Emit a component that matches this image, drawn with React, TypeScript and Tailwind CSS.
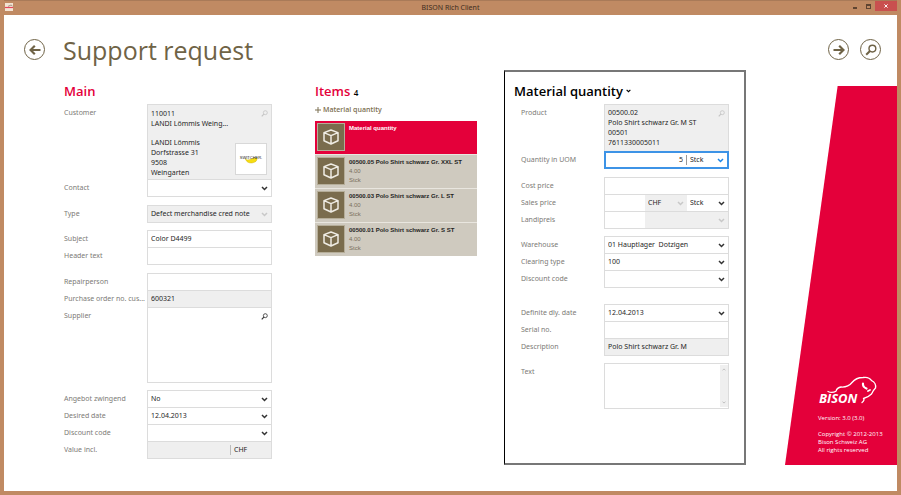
import { useId, type ReactNode } from 'react';

const box = 'relative -mt-px flex min-w-0 flex-1 border border-[#dcdcdc]';

function SearchGlyph({ className }: { className: string }) {
  return (
    <svg viewBox="0 0 12 12" className={className} fill="none" stroke="currentColor" aria-hidden="true">
      <circle cx="7.4" cy="4.6" r="3.4" strokeWidth="1.4" />
      <path d="M5 7L1.2 10.8" strokeWidth="2" />
    </svg>
  );
}

function Chevron({ className }: { className: string }) {
  return (
    <svg viewBox="0 0 8 6" className={`pointer-events-none ${className}`} fill="none" stroke="currentColor" strokeWidth="1.8" aria-hidden="true">
      <path d="M1 1.2L4 4.2L7 1.2" />
    </svg>
  );
}

function Row({ label, id, children }: { label: string; id?: string; children: ReactNode }) {
  return (
    <div className="flex">
      <label htmlFor={id} className="w-[83px] shrink-0 leading-4 whitespace-nowrap text-[#7c7a76]">
        {label}
      </label>
      {children}
    </div>
  );
}

function Group({ children, className = 'mt-[9px]' }: { children: ReactNode; className?: string }) {
  return <div className={className}>{children}</div>;
}

function TextRow({ label, value = '', readOnly = false }: { label: string; value?: string; readOnly?: boolean }) {
  const id = useId();
  return (
    <Row label={label} id={id}>
      <div className={`${box} h-[18px] ${readOnly ? 'bg-[#efefef]' : 'bg-white'}`}>
        <input id={id} defaultValue={value} readOnly={readOnly} className="w-full bg-transparent px-[3px] outline-none" />
      </div>
    </Row>
  );
}

function Drop({ id, name, value, disabled = false, tone = 'text-[#333]', className = 'flex-1' }: {
  id?: string; name?: string; value: string; disabled?: boolean; tone?: string; className?: string;
}) {
  return (
    <div className={`relative flex min-w-0 items-center ${disabled ? 'bg-[#efefef]' : 'bg-white'} ${className}`}>
      <select id={id} aria-label={name} disabled={disabled} defaultValue={value} className="h-full w-full appearance-none bg-transparent px-[3px] whitespace-pre text-[#262626] opacity-100 outline-none">
        <option>{value}</option>
      </select>
      <Chevron className={`absolute right-[3px] h-[5px] w-[7px] ${disabled ? 'text-[#c8c8c8]' : tone}`} />
    </div>
  );
}

function SelectRow({ label, value = '', disabled }: { label: string; value?: string; disabled?: boolean }) {
  const id = useId();
  return (
    <Row label={label} id={id}>
      <div className={`${box} h-[18px]`}>
        <Drop id={id} value={value} disabled={disabled} />
      </div>
    </Row>
  );
}

function RoundButton({ label, children }: { label: string; children: ReactNode }) {
  return (
    <button aria-label={label} className="grid size-[21px] shrink-0 place-items-center rounded-full border border-[#6f6346] text-[#6f6346]">
      {children}
    </button>
  );
}

function Arrow({ className = '' }: { className?: string }) {
  return (
    <svg viewBox="0 0 12 10" className={`h-[10px] w-3 ${className}`} fill="none" stroke="currentColor" strokeWidth="2.2" aria-hidden="true">
      <path d="M0.5 5H10.5M6.2 0.8L10.5 5L6.2 9.2" />
    </svg>
  );
}

function TitleBar() {
  return (
    <header className="relative flex h-[15px] items-center justify-center border-t border-[#a97a58] text-[7px] text-[#3d2c20]">
      <svg viewBox="0 0 8 8" className="absolute top-[2px] left-[1px] size-2" aria-hidden="true">
        <rect width="8" height="8" fill="#f3e3d3" />
        <path d="M0 4.5H8" stroke="#e4465c" strokeWidth="1.2" />
        <path d="M3 3.4L6 2L7.5 3" stroke="#8c7d6c" strokeWidth="0.8" fill="none" />
      </svg>
      <h1>BISON Rich Client</h1>
      <div className="absolute top-0 right-0 flex h-[10px]">
        <button aria-label="Minimize" className="grid w-[13px] place-items-center">
          <span className="mt-[3px] h-[2px] w-1 bg-[#5f4431]" />
        </button>
        <button aria-label="Maximize" className="grid w-[14px] place-items-center">
          <span className="h-[5px] w-[5px] border border-t-2 border-[#5f4431]" />
        </button>
        <button aria-label="Close" className="grid w-[22px] place-items-center bg-[#c9504f] text-white">
          <svg viewBox="0 0 5 5" className="size-1" stroke="currentColor" strokeWidth="1.2" aria-hidden="true">
            <path d="M0.5 0.5L4.5 4.5M4.5 0.5L0.5 4.5" />
          </svg>
        </button>
      </div>
    </header>
  );
}

function MainColumn() {
  return (
    <section className="min-w-0 pt-[13px]">
      <h3 className="font-['Open_Sans',sans-serif] text-[13px] leading-4 font-semibold text-[#e4003a]">Main</h3>
      <Group className="mt-[6px]">
        <Row label="Customer">
          <div className={`${box} h-[76px] bg-[#efefef] px-[3px] pt-1 leading-[10px]`}>
            <div className="min-w-0">
              <p>110011</p>
              <p>LANDI Lömmis Weing...</p>
              <p className="mt-[9px]">LANDI Lömmis</p>
              <p>Dorfstrasse 31</p>
              <p>9508</p>
              <p>Weingarten</p>
            </div>
            <button aria-label="Search customer" className="absolute top-[5px] right-[3px] text-[#c4c4c4]">
              <SearchGlyph className="size-[7px]" />
            </button>
            <svg viewBox="0 0 32 32" className="absolute right-1 bottom-1 size-8" role="img" aria-label="Switcher">
              <rect x="0.5" y="0.5" width="31" height="31" fill="#fff" stroke="#d8d8d8" />
              <path d="M10 15.500Q12 18 16 16Q19 14.500 22 15Q22.500 19 17 20Q12 20.500 10 15.500Z" fill="#f6dd12" stroke="#c9ab10" strokeWidth="0.4" />
              <text x="16" y="16" textAnchor="middle" fontSize="4" fontFamily="Liberation Sans, sans-serif" fill="#222">SWITCHER.</text>
            </svg>
          </div>
        </Row>
        <SelectRow label="Contact" />
      </Group>
      <Group>
        <SelectRow label="Type" value="Defect merchandise cred note" disabled />
      </Group>
      <Group className="mt-2">
        <TextRow label="Subject" value="Color D4499" />
        <TextRow label="Header text" />
      </Group>
      <Group>
        <TextRow label="Repairperson" />
        <TextRow label="Purchase order no. cus..." value="600321" readOnly />
        <Row label="Supplier" id="supplier">
          <div className={`${box} h-[76px]`}>
            <textarea id="supplier" className="w-full resize-none px-[3px] outline-none" />
            <button aria-label="Search supplier" className="absolute top-[5px] right-[3px] text-[#333]">
              <SearchGlyph className="size-[7px]" />
            </button>
          </div>
        </Row>
      </Group>
      <Group className="mt-2">
        <SelectRow label="Angebot zwingend" value="No" />
        <SelectRow label="Desired date" value="12.04.2013" />
        <SelectRow label="Discount code" />
        <Row label="Value incl." id="value">
          <div className={`${box} h-[18px] items-center bg-[#efefef]`}>
            <input id="value" readOnly className="min-w-0 flex-1 bg-transparent px-[3px] text-right outline-none" />
            <span className="h-[10px] w-[41px] border-l border-[#bbb] pl-[3px] leading-[10px]">CHF</span>
          </div>
        </Row>
      </Group>
    </section>
  );
}

const items = [
  '00500.05 Polo Shirt schwarz Gr. XXL ST',
  '00500.03 Polo Shirt schwarz Gr. L ST',
  '00500.01 Polo Shirt schwarz Gr. S ST',
];

function Tile() {
  return (
    <span className="grid size-7 shrink-0 place-items-center border border-[#b5ad98] bg-[#7a6c4d]">
      <svg viewBox="0 0 16 16" className="size-4" fill="none" stroke="#efece4" strokeWidth="1.5" strokeLinejoin="round" aria-hidden="true">
        <path d="M8 1L15 3.6V11.8L8 15L1 11.8V3.6ZM1 3.6L8 6.6L15 3.6M8 6.6V15" />
      </svg>
    </span>
  );
}

function ItemsColumn() {
  return (
    <section className="ml-[43px] min-w-0 pt-[13px]">
      <h3 className="font-['Open_Sans',sans-serif] text-[13px] leading-4 font-semibold text-[#e4003a]">
        Items <span className="text-[8px] text-black">4</span>
      </h3>
      <button className="mt-1 flex items-center gap-[2px] font-['Open_Sans',sans-serif] text-[7px] leading-[10px] font-semibold text-[#7d7052]">
        <svg viewBox="0 0 6 6" className="size-[6px]" stroke="currentColor" aria-hidden="true">
          <path d="M3 0V6M0 3H6" />
        </svg>
        Material quantity
      </button>
      <ul className="mt-[6px] flex flex-col gap-px bg-[#e9e6df] font-['Liberation_Sans',Arial,sans-serif] text-[6px] leading-[9px]">
        <li className="flex h-[33px] gap-1 bg-[#e4003a] px-[2px] pt-[2px] font-bold text-white">
          <Tile />
          <span className="pt-px">Material quantity</span>
        </li>
        {items.map((name) => (
          <li key={name} className="flex h-[33px] gap-1 bg-[#cfcabf] px-[2px] pt-[2px] text-[#7b705c]">
            <Tile />
            <div className="min-w-0 pt-px whitespace-nowrap">
              <p className="font-bold text-[#1e1e1e]">{name}</p>
              <p>4.00</p>
              <p>Stck</p>
            </div>
          </li>
        ))}
      </ul>
    </section>
  );
}

function DetailPanel() {
  return (
    <section className="ml-[27px] min-w-0 border-2 border-l border-[#777] border-l-black pt-[11px] pr-[15px] pl-4">
      <h3 className="-ml-[7px] flex items-center gap-[3px] font-['Open_Sans',sans-serif] text-[13px] leading-4 font-semibold text-black">
        Material quantity
        <Chevron className="h-1 w-[5px]" />
      </h3>
      <Group className="mt-[6px]">
        <Row label="Product">
          <div className={`${box} h-[48px] bg-[#efefef] px-[3px] pt-[3px] leading-[10px]`}>
            <div className="min-w-0">
              <p>00500.02</p>
              <p>Polo Shirt schwarz Gr. M ST</p>
              <p>00501</p>
              <p>7611330005011</p>
            </div>
            <button aria-label="Search product" className="absolute top-[5px] right-[3px] text-[#c4c4c4]">
              <SearchGlyph className="size-[7px]" />
            </button>
          </div>
        </Row>
        <Row label="Quantity in UOM" id="qty">
          <div className="relative -mt-px flex h-[18px] min-w-0 flex-1 items-center border-2 border-[#3d93e6] bg-white">
            <input id="qty" defaultValue="5" className="min-w-0 flex-1 px-[3px] text-right outline-none" />
            <span className="h-[10px] w-px bg-[#999]" />
            <Drop name="Unit of quantity" value="Stck" tone="text-[#1c86e8]" className="w-[40px]" />
          </div>
        </Row>
      </Group>
      <Group>
        <TextRow label="Cost price" />
        <Row label="Sales price" id="sales">
          <div className={`${box} h-[18px]`}>
            <input id="sales" className="min-w-0 flex-1 px-[3px] outline-none" />
            <Drop name="Currency" value="CHF" disabled className="w-[42px]" />
            <Drop name="Sales unit" value="Stck" className="w-[41px]" />
          </div>
        </Row>
        <Row label="Landipreis" id="landi">
          <div className={`${box} h-[18px]`}>
            <input id="landi" className="min-w-0 flex-1 px-[3px] outline-none" />
            <Drop name="Landipreis currency" value="" disabled className="w-[83px]" />
          </div>
        </Row>
      </Group>
      <Group className="mt-2">
        <SelectRow label="Warehouse" value={'01 Hauptlager\u00a0 Dotzigen'} />
        <SelectRow label="Clearing type" value="100" />
        <SelectRow label="Discount code" />
      </Group>
      <Group className="mt-[17px]">
        <SelectRow label="Definite dly. date" value="12.04.2013" />
        <TextRow label="Serial no." />
        <TextRow label="Description" value="Polo Shirt schwarz Gr. M" readOnly />
      </Group>
      <Group className="mt-2">
        <Row label="Text" id="text">
          <div className={`${box} h-[46px]`}>
            <textarea id="text" className="min-w-0 flex-1 resize-none px-[3px] outline-none" />
            <div className="my-px flex w-2 flex-col items-center justify-between bg-[#efefef] py-[3px] text-[#bbb]">
              <Chevron className="h-[3px] w-1 rotate-180" />
              <Chevron className="h-[3px] w-1" />
            </div>
          </div>
        </Row>
      </Group>
    </section>
  );
}

function BrandColumn() {
  return (
    <aside className="mt-4 ml-[39px] flex min-w-0 flex-col justify-end bg-[#e4003a] pb-[11px] pl-[33px] font-['Open_Sans',sans-serif] text-[6px] leading-[8px] font-medium whitespace-nowrap text-white [clip-path:polygon(47%_0,100%_0,100%_100%,0_100%)]">
      <svg viewBox="0 0 60 32" className="mb-2 h-8 w-[60px] overflow-visible" role="img" aria-label="Bison" fill="none" stroke="#fff" strokeLinecap="round" strokeLinejoin="round">
        <path d="M10 17.500Q14 19.500 18 17.200Q19 13.500 23 13Q30 13.500 34 8.500Q38 3.500 45 3.500Q51 2.500 53.500 6.500" strokeWidth="1.3" />
        <path d="M53.500 6.500Q58.500 9 57.500 14Q55 16.500 53.500 20Q50 23.500 45.500 24.500Q47 26 44 28.500" strokeWidth="1.3" />
        <path d="M45 9.500Q44.500 13 48.500 14.500" strokeWidth="2.200" />
        <path d="M50 17L52 16" strokeWidth="1.800" />
        <text x="1" y="29" fontSize="13" fontWeight="700" fontStyle="italic" fontFamily="Open Sans, sans-serif" fill="#fff" stroke="none">BISON</text>
      </svg>
      <p>Version: 3.0 (3.0)</p>
      <p className="mt-2">Copyright © 2012-2013</p>
      <p>Bison Schweiz AG</p>
      <p>All rights reserved</p>
    </aside>
  );
}

export default function App() {
  return (
    <div className="flex min-h-screen flex-col bg-[#c08a63] px-1 pb-1 font-['Noto_Sans','Open_Sans',sans-serif] text-[7px] text-[#262626]">
      <TitleBar />
      <main className="flex flex-1 flex-col bg-white">
        <div className="flex h-[55px] items-center pt-[14px] pr-4 pl-5">
          <RoundButton label="Back">
            <Arrow className="rotate-180" />
          </RoundButton>
          <h2 className="ml-[18px] flex-1 font-['Open_Sans',sans-serif] text-[25px] leading-8 text-[#6f6346]">Support request</h2>
          <div className="flex gap-[11px]">
            <RoundButton label="Forward">
              <Arrow />
            </RoundButton>
            <RoundButton label="Search">
              <SearchGlyph className="size-3" />
            </RoundButton>
          </div>
        </div>
        <div className="mb-[26px] grid flex-1 grid-cols-[208fr_205fr_269fr_151fr] pl-[60px]">
          <MainColumn />
          <ItemsColumn />
          <DetailPanel />
          <BrandColumn />
        </div>
      </main>
    </div>
  );
}
